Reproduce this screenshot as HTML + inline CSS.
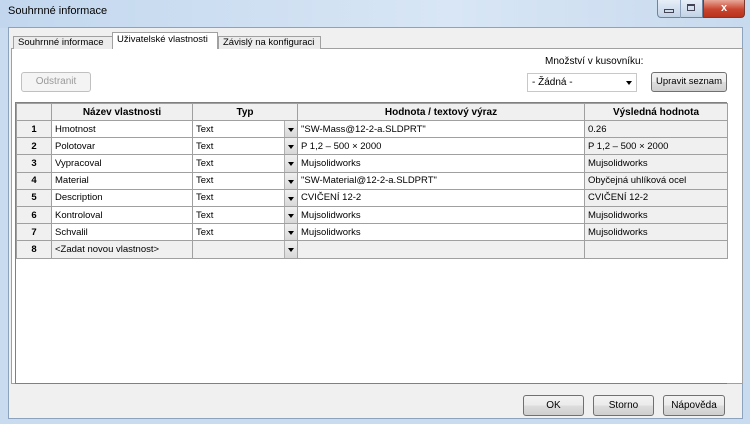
<!DOCTYPE html>
<html><head><meta charset="utf-8"><style>
*{margin:0;padding:0;box-sizing:border-box}
body{width:750px;height:424px;overflow:hidden;font-family:"Liberation Sans","DejaVu Sans",sans-serif;font-size:10px;color:#000;background:#c9dbef;position:relative}
.a{position:absolute;white-space:nowrap}
.btn{position:absolute;border:1px solid #707070;border-radius:3px;background:linear-gradient(#f2f2f2,#ebebeb 50%,#dddddd 51%,#cfcfcf);text-align:center;font-size:10px;line-height:18px;white-space:nowrap}
table{border-collapse:collapse;table-layout:fixed}
td{border:1px solid #a0a0a0;height:17.2px;padding:0 3px;font-size:9.5px;line-height:15px;white-space:nowrap;overflow:hidden;position:relative;vertical-align:middle}
th{border:1px solid #a0a0a0;height:17px;background:#f0f0f0;font-size:10px;font-weight:bold}
td.n{background:#f0f0f0;text-align:center;font-weight:bold}
td.r{background:#f0f0f0}
.dd{position:absolute;right:0;top:0;width:13px;height:100%;background:linear-gradient(#f0f0f0,#d8d8d8);border-left:1px solid #b0b0b0}
.dd:after{content:"";position:absolute;left:3px;top:7px;border-left:3.5px solid transparent;border-right:3.5px solid transparent;border-top:4px solid #000}
</style></head><body>
<div class="a" style="left:0;top:0;width:750px;height:28px;background:linear-gradient(90deg,#c2d7ee,#d8e6f5 60%,#c8daee)"></div>
<div class="a" style="left:8px;top:5px;font-size:11px;color:#000">Souhrnné informace</div>
<div class="a" style="left:657px;top:0;width:46px;height:18px;border:1px solid #6d84a0;border-top:none;border-radius:0 0 0 4px;background:linear-gradient(#e6eef8,#c2d2e6)"></div>
<div class="a" style="left:680px;top:0;width:1px;height:18px;background:#8fa2bb"></div>
<div class="a" style="left:664px;top:9px;width:10px;height:4px;border:1px solid #445"></div>
<div class="a" style="left:687px;top:4px;width:8px;height:7px;border:1px solid #445;border-top-width:2px"></div>
<div class="a" style="left:703px;top:0;width:42px;height:18px;border:1px solid #7a3a30;border-top:none;border-radius:0 0 4px 0;background:linear-gradient(#e8a89a,#c9452e 55%,#b8321c);color:#fff;font-weight:bold;text-align:center;font-size:11px;line-height:16px">x</div>
<div class="a" style="left:8px;top:27px;width:735px;height:392px;background:#f0f0f0;border:1px solid #8da2bd"></div>
<div class="a" style="left:11px;top:48px;width:732px;height:336px;background:#fff;border:1px solid #a0a0a0"></div>
<div class="a" style="left:13px;top:36px;width:100px;height:13px;border:1px solid #a0a0a0;border-bottom:none;background:#ececec;font-size:9.5px;line-height:12px;padding-left:4px;overflow:hidden">Souhrnné informace</div>
<div class="a" style="left:112px;top:32px;width:106px;height:17px;border:1px solid #a0a0a0;border-bottom:none;background:#fff;font-size:9.5px;line-height:14px;padding-left:4px;overflow:hidden">Uživatelské vlastnosti</div>
<div class="a" style="left:218px;top:36px;width:103px;height:13px;border:1px solid #a0a0a0;border-bottom:none;background:#ececec;font-size:9.5px;line-height:12px;padding-left:4px;overflow:hidden">Závislý na konfiguraci</div>
<div class="btn" style="left:21px;top:72px;width:70px;height:20px;border-color:#c0c0c0;background:#f4f4f4;color:#9a9a9a">Odstranit</div>
<div class="a" style="left:545px;top:56px;font-size:10px">Množství v kusovníku:</div>
<div class="a" style="left:527px;top:73px;width:110px;height:19px;border:1px solid #c8c8c8;background:#fff;font-size:10px;line-height:17px;padding-left:4px">- Žádná -</div>
<div class="a" style="left:626px;top:81px;border-left:3.5px solid transparent;border-right:3.5px solid transparent;border-top:4px solid #000"></div>
<div class="btn" style="left:651px;top:72px;width:76px;height:20px;font-size:9.5px">Upravit seznam</div>
<div class="a" style="left:15px;top:102px;width:712px;height:282px;border:1px solid #808080;border-right:none;background:#fff"></div>
<table class="a" style="left:16px;top:103px;width:711px">
<colgroup><col style="width:35px"><col style="width:141px"><col style="width:105px"><col style="width:287px"><col style="width:143px"></colgroup>
<tr><th></th><th>Název vlastnosti</th><th>Typ</th><th>Hodnota / textový výraz</th><th>Výsledná hodnota</th></tr>
<tr><td class="n">1</td><td>Hmotnost</td><td>Text<span class="dd"></span></td><td>"SW-Mass@12-2-a.SLDPRT"</td><td class="r">0.26</td></tr>
<tr><td class="n">2</td><td>Polotovar</td><td>Text<span class="dd"></span></td><td>P 1,2 – 500 × 2000</td><td class="r">P 1,2 – 500 × 2000</td></tr>
<tr><td class="n">3</td><td>Vypracoval</td><td>Text<span class="dd"></span></td><td>Mujsolidworks</td><td class="r">Mujsolidworks</td></tr>
<tr><td class="n">4</td><td>Material</td><td>Text<span class="dd"></span></td><td>"SW-Material@12-2-a.SLDPRT"</td><td class="r">Obyčejná uhlíková ocel</td></tr>
<tr><td class="n">5</td><td>Description</td><td>Text<span class="dd"></span></td><td>CVIČENÍ 12-2</td><td class="r">CVIČENÍ 12-2</td></tr>
<tr><td class="n">6</td><td>Kontroloval</td><td>Text<span class="dd"></span></td><td>Mujsolidworks</td><td class="r">Mujsolidworks</td></tr>
<tr><td class="n">7</td><td>Schvalil</td><td>Text<span class="dd"></span></td><td>Mujsolidworks</td><td class="r">Mujsolidworks</td></tr>
<tr><td class="n">8</td><td class="r">&lt;Zadat novou vlastnost&gt;</td><td class="r"><span class="dd"></span></td><td class="r"></td><td class="r"></td></tr>
</table>
<div class="btn" style="left:523px;top:395px;width:61px;height:21px;line-height:19px">OK</div>
<div class="btn" style="left:593px;top:395px;width:61px;height:21px;line-height:19px">Storno</div>
<div class="btn" style="left:663px;top:395px;width:62px;height:21px;line-height:19px">Nápověda</div>
</body></html>
